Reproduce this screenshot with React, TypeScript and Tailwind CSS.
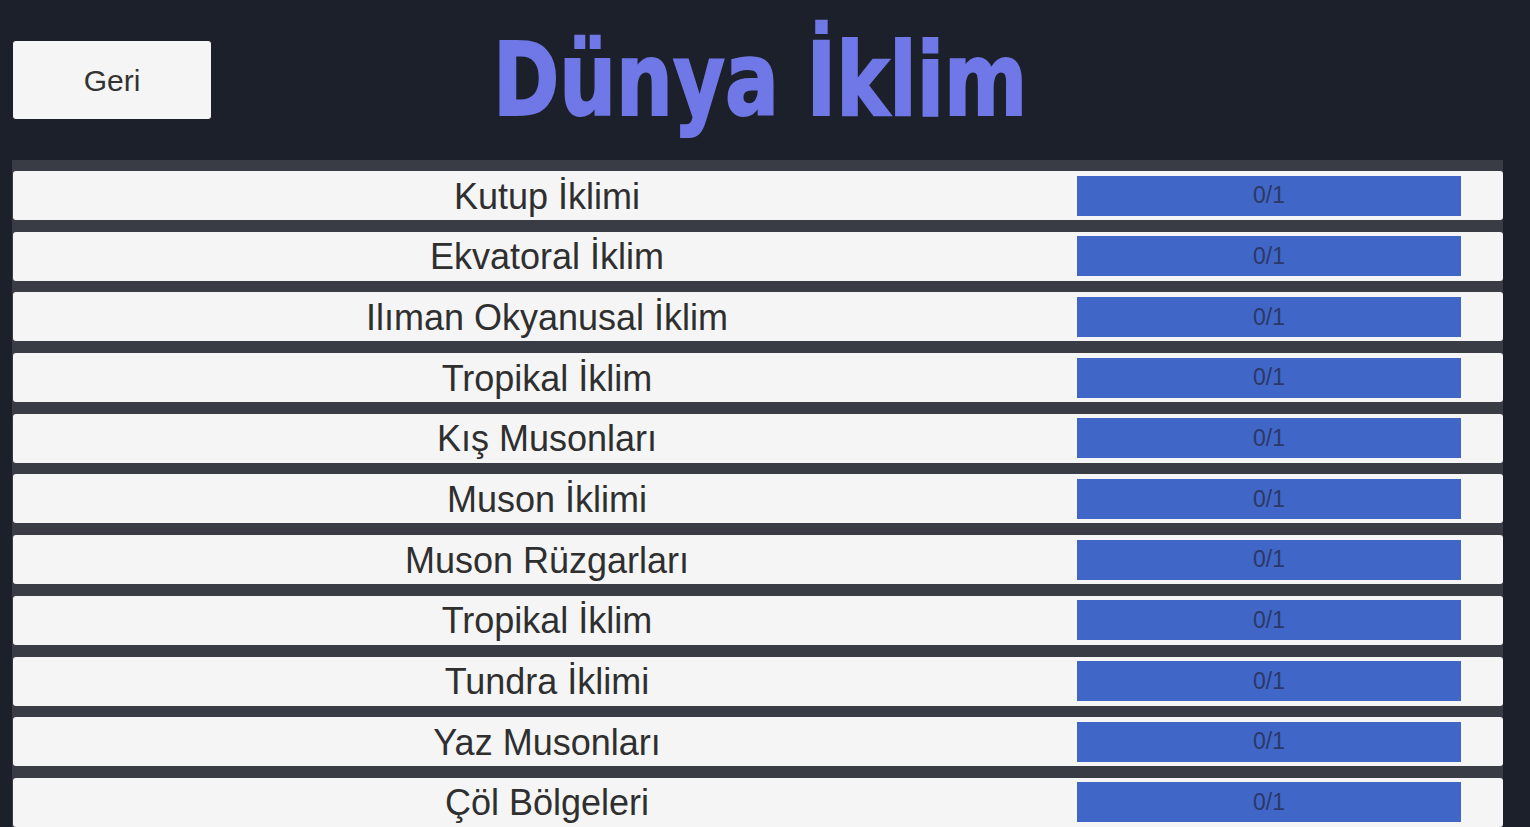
import React from "react";

const items = [
  "Kutup İklimi",
  "Ekvatoral İklim",
  "Ilıman Okyanusal İklim",
  "Tropikal İklim",
  "Kış Musonları",
  "Muson İklimi",
  "Muson Rüzgarları",
  "Tropikal İklim",
  "Tundra İklimi",
  "Yaz Musonları",
  "Çöl Bölgeleri",
];

export default function App() {
  return (
    <div
      className="h-screen w-full overflow-hidden bg-[#1c202b]"
      style={{ fontFamily: '"Liberation Sans", Arial, sans-serif' }}
    >
      <div className="relative h-[160px]">
        <button className="absolute left-[13px] top-[41px] flex h-[78px] w-[198px] items-center justify-center rounded-[3px] bg-[#f5f5f5] text-[30px] text-[#333333]">
          Geri
        </button>
        <div className="flex justify-center pr-[9px] pt-[29px]">
          <h1
            className="origin-center scale-x-[0.87] whitespace-nowrap text-[102px] font-bold leading-none text-[#6f78e6] [-webkit-text-stroke:2px_#6f78e6]"
            style={{ fontFamily: '"DejaVu Sans Condensed", "DejaVu Sans", sans-serif' }}
          >
            Dünya İklim
          </h1>
        </div>
      </div>
      <div className="ml-[12px] mr-[27px] flex flex-col gap-[11.7px] bg-[#393c44] pt-[11px]">
        {items.map((name, i) => (
          <div
            key={i}
            className="ml-[1px] flex h-[49px] items-center rounded-[3px] bg-[#f5f5f6]"
          >
            <div className="flex-1 pl-[4px] pt-[2px] text-center text-[36px] leading-none text-[#2f2f2f]">
              {name}
            </div>
            <div className="mr-[42px] flex h-[40px] w-[384px] items-center justify-center bg-[#4066c8] text-[23px] text-[#2c3866]">
              0/1
            </div>
          </div>
        ))}
      </div>
    </div>
  );
}
